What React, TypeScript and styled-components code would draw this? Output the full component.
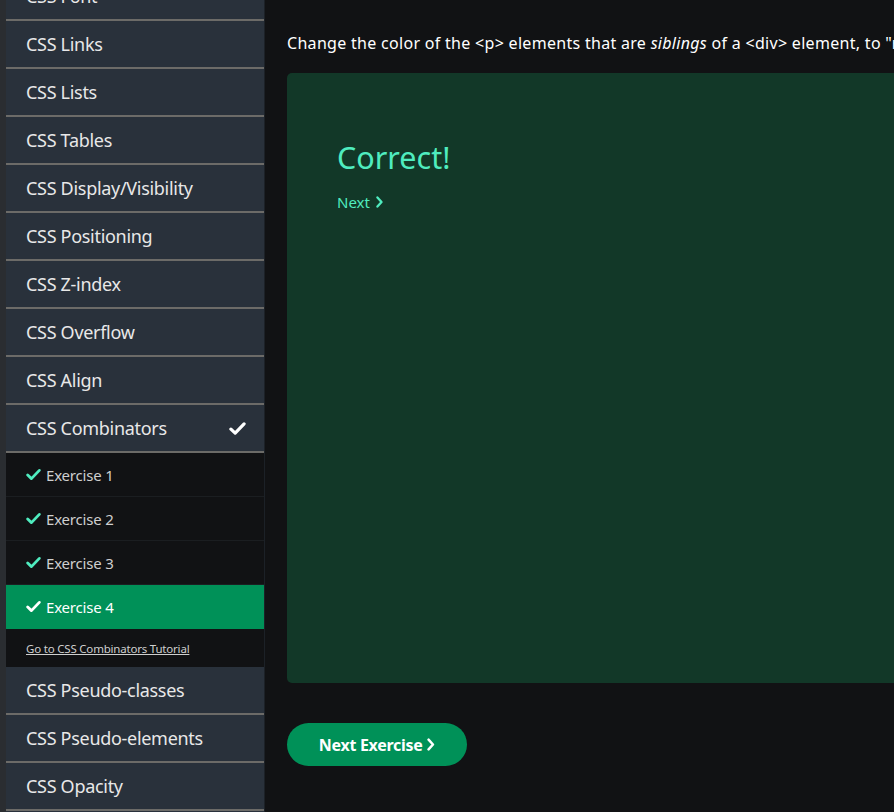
import React from "react";
import styled, { createGlobalStyle } from "styled-components";

const Global = createGlobalStyle`
  html, body { margin: 0; padding: 0; height: 100%; background: #111214; overflow: hidden; }
  #root { height: 100%; }
  * { box-sizing: border-box; }
`;

const Page = styled.div`
  display: flex;
  height: 812px;
  overflow: hidden;
  font-family: "Noto Sans", "Open Sans", sans-serif;
  background: #111214;
`;

const Gutter = styled.div`
  width: 6px;
  flex: none;
  background: #2a2d31;
`;

const Sidebar = styled.nav`
  width: 259px;
  flex: none;
  background: #29313b;
  border-right: 1px solid #1c2127;
  margin-top: -27px;
  display: flex;
  flex-direction: column;
`;

const NavItem = styled.div`
  height: 48px;
  flex: none;
  display: flex;
  align-items: center;
  justify-content: space-between;
  padding: 0 18px 0 20px;
  border-bottom: 2px solid #6c6b68;
  color: #e8e8e8;
  font-size: 18px;
  letter-spacing: -0.3px;
`;

const SubList = styled.div`
  background: #111214;
  display: flex;
  flex-direction: column;
`;

const SubItem = styled.div<{ $active?: boolean }>`
  height: 44px;
  display: flex;
  align-items: center;
  gap: 5px;
  padding-left: 20px;
  font-size: 15px;
  letter-spacing: -0.2px;
  color: ${(p) => (p.$active ? "#ffffff" : "#cfcfcf")};
  background: ${(p) => (p.$active ? "#009158" : "#111214")};
  border-bottom: 1px solid ${(p) => (p.$active ? "#009158" : "#1b1e21")};
`;

const TutorialLink = styled.a`
  height: 38px;
  display: flex;
  align-items: center;
  padding-left: 20px;
  font-size: 11.5px;
  color: #cfcfcf;
  text-decoration: underline;
  letter-spacing: -0.2px;
`;

const Main = styled.main`
  flex: 1;
  min-width: 0;
  padding: 32px 0 0 22px;
  display: flex;
  flex-direction: column;
  overflow: hidden;
`;

const Instruction = styled.p`
  margin: 0;
  color: #ffffff;
  font-size: 16px;
  line-height: 22px;
  white-space: nowrap;
  letter-spacing: 0.3px;
`;

const ResultPanel = styled.section`
  margin-top: 19px;
  height: 610px;
  width: 640px;
  background: #123828;
  border-radius: 5px;
  padding: 64px 50px;
`;

const CorrectTitle = styled.h2`
  margin: 0;
  font-weight: 400;
  font-size: 30.5px;
  line-height: 40px;
  color: #4fecbf;
`;

const NextLink = styled.a`
  display: inline-flex;
  align-items: center;
  gap: 6px;
  margin-top: 15px;
  font-size: 15px;
  color: #4fecbf;
`;

const NextButton = styled.button`
  margin-top: 40px;
  width: 180px;
  height: 43px;
  flex: none;
  border: none;
  border-radius: 22px;
  background: #009158;
  color: #ffffff;
  font-family: "Noto Sans", sans-serif;
  font-weight: 700;
  font-size: 16px;
  letter-spacing: -0.3px;
  display: flex;
  align-items: center;
  justify-content: center;
  gap: 5px;
`;

const Check = ({ color, size }: { color: string; size: number }) => (
  <svg width={size} height={size} viewBox="0 0 16 16" aria-hidden>
    <path d="M1.8 8.6 L5.8 12.4 L14.2 3.6" fill="none" stroke={color} strokeWidth="3" strokeLinecap="round" strokeLinejoin="round" />
  </svg>
);

const Chevron = ({ color, size }: { color: string; size: number }) => (
  <svg width={size * 0.6} height={size} viewBox="0 0 6 10" aria-hidden>
    <path d="M1.2 1.2 L4.6 5 L1.2 8.8" fill="none" stroke={color} strokeWidth="1.9" strokeLinecap="round" strokeLinejoin="round" />
  </svg>
);

const topItems = [
  "CSS Font",
  "CSS Links",
  "CSS Lists",
  "CSS Tables",
  "CSS Display/Visibility",
  "CSS Positioning",
  "CSS Z-index",
  "CSS Overflow",
  "CSS Align",
];
const bottomItems = ["CSS Pseudo-classes", "CSS Pseudo-elements", "CSS Opacity"];

export default function App() {
  return (
    <Page>
      <Global />
      <Gutter />
      <Sidebar>
        {topItems.map((t) => (
          <NavItem key={t}>{t}</NavItem>
        ))}
        <NavItem>
          CSS Combinators
          <Check color="#ffffff" size={17} />
        </NavItem>
        <SubList>
          {[1, 2, 3, 4].map((n) => (
            <SubItem key={n} $active={n === 4}>
              <Check color={n === 4 ? "#ffffff" : "#4fecbf"} size={15} />
              Exercise {n}
            </SubItem>
          ))}
          <TutorialLink>Go to CSS Combinators Tutorial</TutorialLink>
        </SubList>
        {bottomItems.map((t) => (
          <NavItem key={t}>{t}</NavItem>
        ))}
      </Sidebar>
      <Main>
        <Instruction>
          Change the color of the &lt;p&gt; elements that are <i>siblings</i> of a &lt;div&gt; element, to "red".
        </Instruction>
        <ResultPanel>
          <CorrectTitle>Correct!</CorrectTitle>
          <NextLink>
            Next <Chevron color="#4fecbf" size={12} />
          </NextLink>
        </ResultPanel>
        <NextButton>
          Next Exercise <Chevron color="#ffffff" size={13} />
        </NextButton>
      </Main>
    </Page>
  );
}
